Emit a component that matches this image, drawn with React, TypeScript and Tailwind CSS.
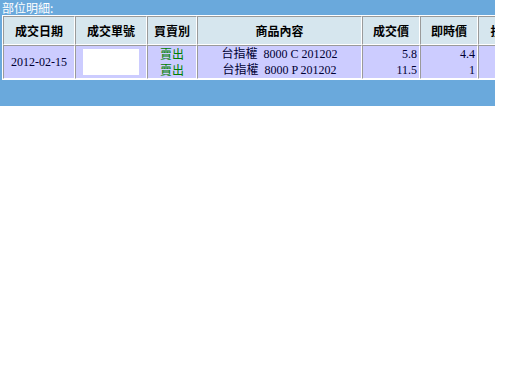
import React from "react";

const serif = "font-['Liberation_Serif','Noto_Sans_CJK_TC',serif]";

const th =
  "border border-t-[#9a9a9a] border-l-[#9a9a9a] border-r-white border-b-white bg-[#d6e6ee] font-bold text-[12px] text-black text-center align-middle p-0 font-['Noto_Sans_CJK_TC',sans-serif]";
const td =
  "border border-t-[#9a9a9a] border-l-[#9a9a9a] border-r-white border-b-white bg-[#ccccff] text-[12px] text-[#000033] align-middle p-0 leading-[16px]";

export default function App() {
  return (
    <div className="bg-white w-[512px] h-[384px]">
      <div className="w-[495px] h-[106px] bg-[#6aa9dc] overflow-hidden">
        <div className="text-white text-[12px] leading-[15px] h-[15px] pl-[2px] font-['Noto_Sans_CJK_TC',sans-serif]">
          部位明細:
        </div>
        <table className="ml-[2px] border-separate border-spacing-0 border border-white table-fixed w-[524px]">
          <colgroup>
            <col className="w-[72px]" />
            <col className="w-[72px]" />
            <col className="w-[50px]" />
            <col className="w-[165px]" />
            <col className="w-[58px]" />
            <col className="w-[58px]" />
            <col className="w-[49px]" />
          </colgroup>
          <thead>
            <tr className="h-[29px]">
              <th className={th}>成交日期</th>
              <th className={th}>成交單號</th>
              <th className={th}>買賣別</th>
              <th className={th}>商品內容</th>
              <th className={th}>成交價</th>
              <th className={th}>即時價</th>
              <th className={th}>損益</th>
            </tr>
          </thead>
          <tbody>
            <tr className="h-[33px]">
              <td className={`${td} ${serif} text-center`}>2012-02-15</td>
              <td className={td}>
                <div className="w-[56px] h-[26px] bg-white mx-auto" />
              </td>
              <td className={`${td} text-center text-[#008000] font-['Noto_Sans_CJK_TC',sans-serif]`}>
                <div>賣出</div>
                <div>賣出</div>
              </td>
              <td className={`${td} ${serif} text-center`}>
                <div>台指權&nbsp;&nbsp;8000 C 201202</div>
                <div>台指權&nbsp;&nbsp;8000 P 201202</div>
              </td>
              <td className={`${td} ${serif} text-right pr-[2px]`}>
                <div>5.8</div>
                <div>11.5</div>
              </td>
              <td className={`${td} ${serif} text-right pr-[2px]`}>
                <div>4.4</div>
                <div>1</div>
              </td>
              <td className={`${td} ${serif} text-right pr-[2px]`}>
                <div>&nbsp;</div>
                <div>&nbsp;</div>
              </td>
            </tr>
          </tbody>
        </table>
      </div>
    </div>
  );
}
